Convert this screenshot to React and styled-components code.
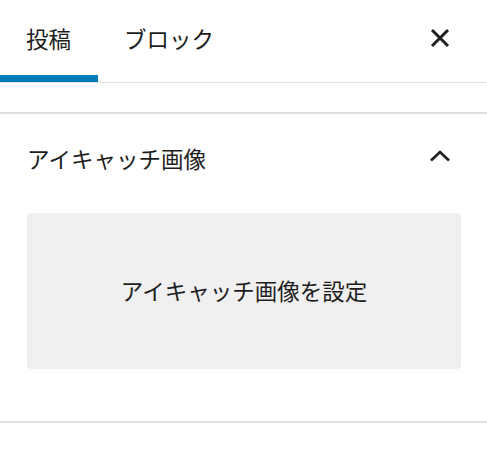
import React from "react";
import styled, { createGlobalStyle } from "styled-components";

const GlobalStyle = createGlobalStyle`
  body {
    margin: 0;
    background: #fff;
    font-family: "Noto Sans CJK JP", "Noto Sans", sans-serif;
    color: #1e1e1e;
  }
`

const Sidebar = styled.div`
  display: flex;
  flex-direction: column;
  width: 487px;
  height: 451px;
  background: #fff;
`

const TabBar = styled.div`
  display: flex;
  align-items: stretch;
  height: 82px;
  border-bottom: 1px solid #e0e0e0;
`

const Tab = styled.button`
  display: flex;
  align-items: center;
  padding: 0 27px 6px 26px;
  border: none;
  background: none;
  font-family: inherit;
  font-size: 22.5px;
  color: #1e1e1e;
  cursor: pointer;
  box-shadow: ${(p) => (p.active ? "inset 0 -7px 0 #007cba" : "none")};
`

const CloseButton = styled.button`
  display: flex;
  align-items: center;
  justify-content: center;
  width: 48px;
  margin-left: auto;
  margin-right: 23px;
  padding: 0 0 6px;
  border: none;
  background: none;
`

const Spacer = styled.div`
  height: 29px;
  border-bottom: 2px solid #e0e0e0;
`

const Panel = styled.div`
  display: flex;
  flex-direction: column;
  border-bottom: 2px solid #e0e0e0;
`

const PanelHeader = styled.div`
  display: flex;
  align-items: center;
  justify-content: space-between;
  height: 90px;
  padding: 0 36px 0 27px;
  font-size: 22.5px;

  span {
    margin-top: -2px;
  }

  svg {
    margin-top: -6px;
  }
`

const PanelBody = styled.div`
  padding: 9px 26px 52px 27px;
`

const ImageButton = styled.button`
  display: flex;
  align-items: center;
  justify-content: center;
  width: 100%;
  height: 156px;
  padding: 0 0 2px;
  border: none;
  border-radius: 4px;
  background: #f0f0f0;
  font-family: inherit;
  font-size: 22.5px;
  color: #1e1e1e;
`

const CloseIcon = () => (
  <svg width="20" height="20" viewBox="0 0 20 20">
    <path d="M2 2L18 18M18 2L2 18" stroke="#1e1e1e" strokeWidth="3" fill="none" />
  </svg>
)

const ChevronUp = () => (
  <svg width="22" height="12" viewBox="0 0 22 12">
    <path d="M2 10.5L11 2L20 10.5" stroke="#1e1e1e" strokeWidth="2.6" fill="none" />
  </svg>
)

const App = () => {
  return (
    <Sidebar>
      <GlobalStyle />
      <TabBar>
        <Tab active>投稿</Tab>
        <Tab>ブロック</Tab>
        <CloseButton>
          <CloseIcon />
        </CloseButton>
      </TabBar>
      <Spacer />
      <Panel>
        <PanelHeader>
          <span>アイキャッチ画像</span>
          <ChevronUp />
        </PanelHeader>
        <PanelBody>
          <ImageButton>アイキャッチ画像を設定</ImageButton>
        </PanelBody>
      </Panel>
    </Sidebar>
  )
}

export default App
